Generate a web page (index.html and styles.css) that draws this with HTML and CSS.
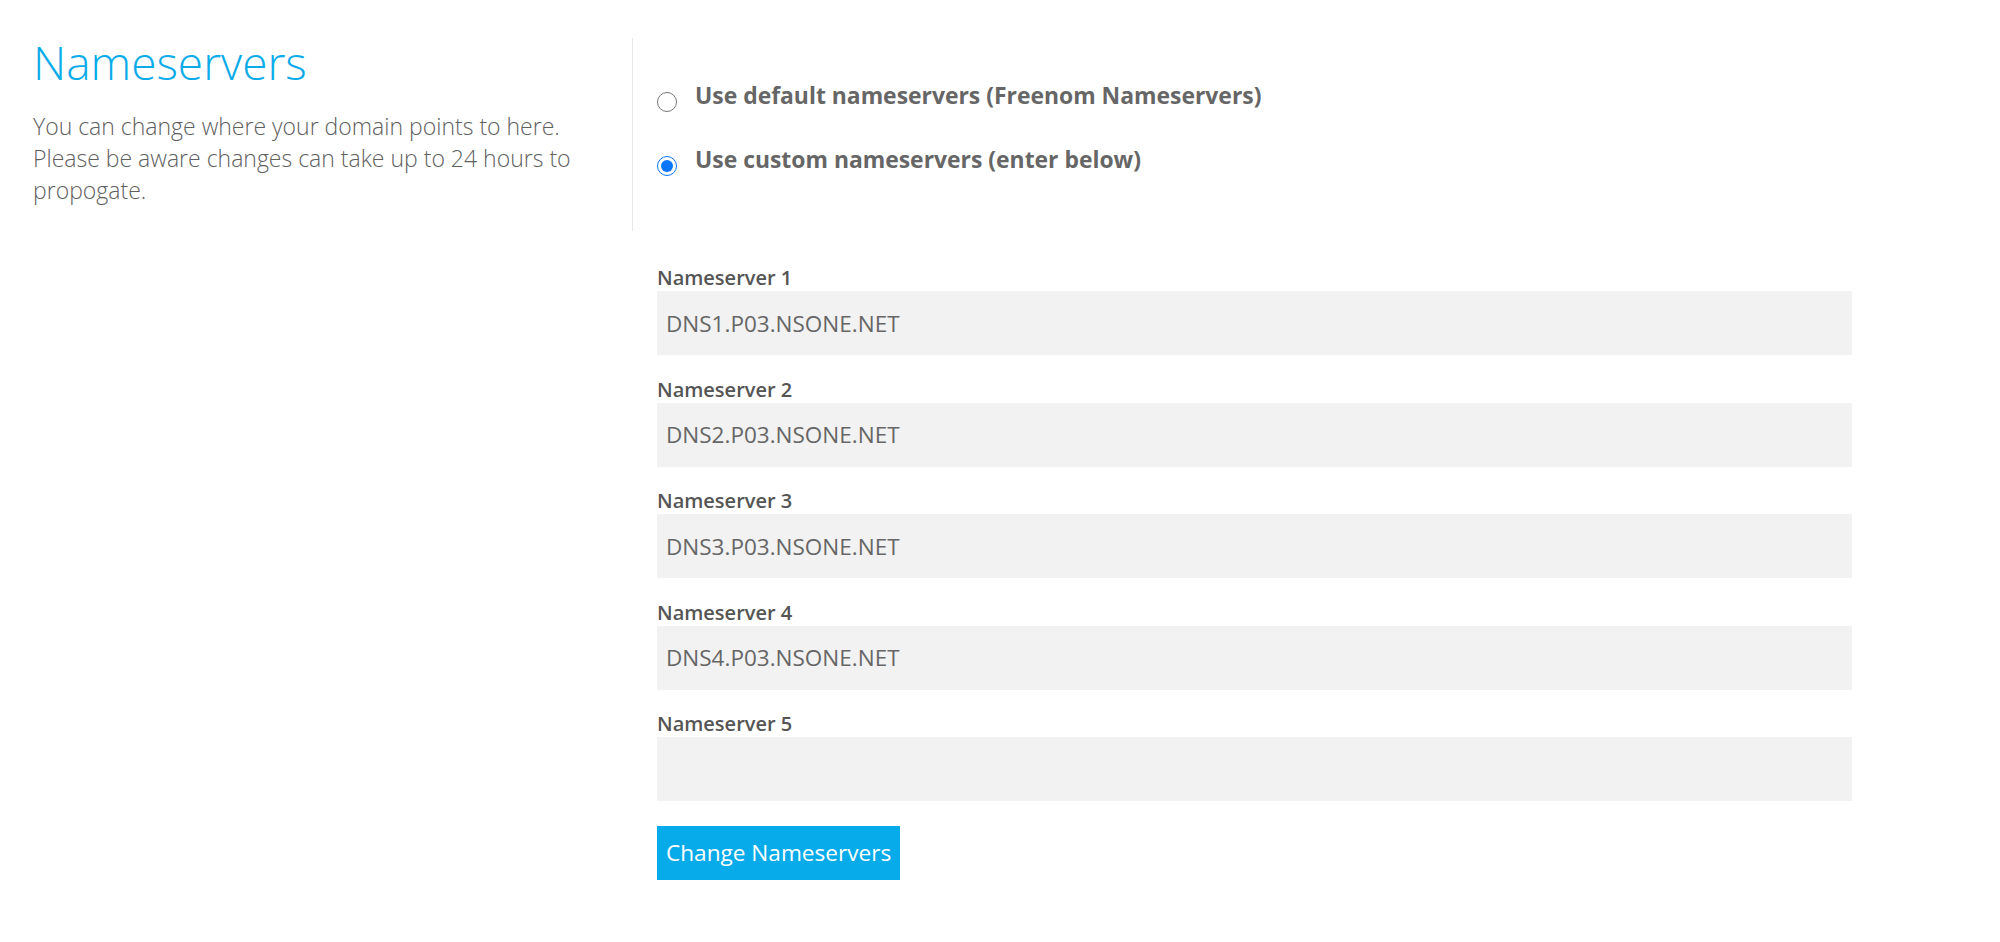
FILE: index.html
```html
<!DOCTYPE html>
<html lang="en">
<head>
<meta charset="utf-8">
<title>Nameservers</title>
<link rel="stylesheet" href="styles.css">
</head>
<body>
<div class="page">
  <section class="intro">
    <h1 class="title">Nameservers</h1>
    <p class="lead">You can change where your domain points to here. Please be aware changes can take up to 24 hours to propogate.</p>
  </section>
  <section class="options">
    <label class="option">
      <input type="radio" name="nstype" class="radio">
      <span class="option-text">Use default nameservers (Freenom Nameservers)</span>
    </label>
    <label class="option">
      <input type="radio" name="nstype" class="radio" checked>
      <span class="option-text">Use custom nameservers (enter below)</span>
    </label>
  </section>
  <form class="fields">
    <div class="field">
      <label class="field-label" for="ns1">Nameserver 1</label>
      <input class="field-input" id="ns1" type="text" value="DNS1.P03.NSONE.NET">
    </div>
    <div class="field">
      <label class="field-label" for="ns2">Nameserver 2</label>
      <input class="field-input" id="ns2" type="text" value="DNS2.P03.NSONE.NET">
    </div>
    <div class="field">
      <label class="field-label" for="ns3">Nameserver 3</label>
      <input class="field-input" id="ns3" type="text" value="DNS3.P03.NSONE.NET">
    </div>
    <div class="field">
      <label class="field-label" for="ns4">Nameserver 4</label>
      <input class="field-input" id="ns4" type="text" value="DNS4.P03.NSONE.NET">
    </div>
    <div class="field">
      <label class="field-label" for="ns5">Nameserver 5</label>
      <input class="field-input" id="ns5" type="text" value="">
    </div>
    <div class="actions">
      <button type="button" class="btn">Change Nameservers</button>
    </div>
  </form>
</div>
</body>
</html>
```
FILE: styles.css
```css
html, body {
  margin: 0;
  padding: 0;
  background: #ffffff;
}

body {
  font-family: "Open Sans", "Liberation Sans", sans-serif;
  color: #666666;
}

.page {
  display: grid;
  grid-template-columns: 599px 1220px;
  padding: 37px 0 0 33px;
}

.intro {
  padding-right: 40px;
}

.title {
  margin: 0;
  font-size: 46px;
  line-height: 50px;
  font-weight: 300;
  color: #0aabe8;
}

.lead {
  margin: 23px 0 0;
  font-size: 23px;
  line-height: 32px;
  font-weight: 300;
  color: #5f5f5f;
}

.options {
  border-left: 1px solid #e8e8e8;
  padding: 42px 0 55px 24px;
  display: flex;
  flex-direction: column;
  gap: 32px;
  margin-top: 1px;
}

.option {
  display: flex;
  align-items: flex-start;
  gap: 18px;
  font-size: 22.9px;
  line-height: 32px;
  font-weight: 700;
  color: #666666;
}

.radio {
  margin: 12px 0 0;
  width: 20px;
  height: 20px;
  flex: none;
  accent-color: #0a75ff;
}

.fields {
  grid-column: 2;
  margin: 35px 0 0 25px;
  display: flex;
  flex-direction: column;
  gap: 22.5px;
}

.field {
  display: flex;
  flex-direction: column;
  gap: 2px;
}

.field-label {
  font-size: 20px;
  line-height: 22px;
  font-weight: 600;
  color: #555555;
  padding-top: 1px;
}

.field-input {
  box-sizing: border-box;
  height: 64px;
  width: 100%;
  border: 0;
  background: #f2f2f2;
  padding: 0 9px;
  font-family: "Open Sans", "Liberation Sans", sans-serif;
  font-size: 22.5px;
  font-weight: 400;
  color: #666666;
  outline: none;
}

.actions {
  padding-top: 2px;
}

.btn {
  height: 54px;
  border: 0;
  padding: 0 9px;
  background: #08abea;
  color: #ffffff;
  font-family: "Open Sans", "Liberation Sans", sans-serif;
  font-size: 22.6px;
  font-weight: 400;
  cursor: pointer;
}
```
